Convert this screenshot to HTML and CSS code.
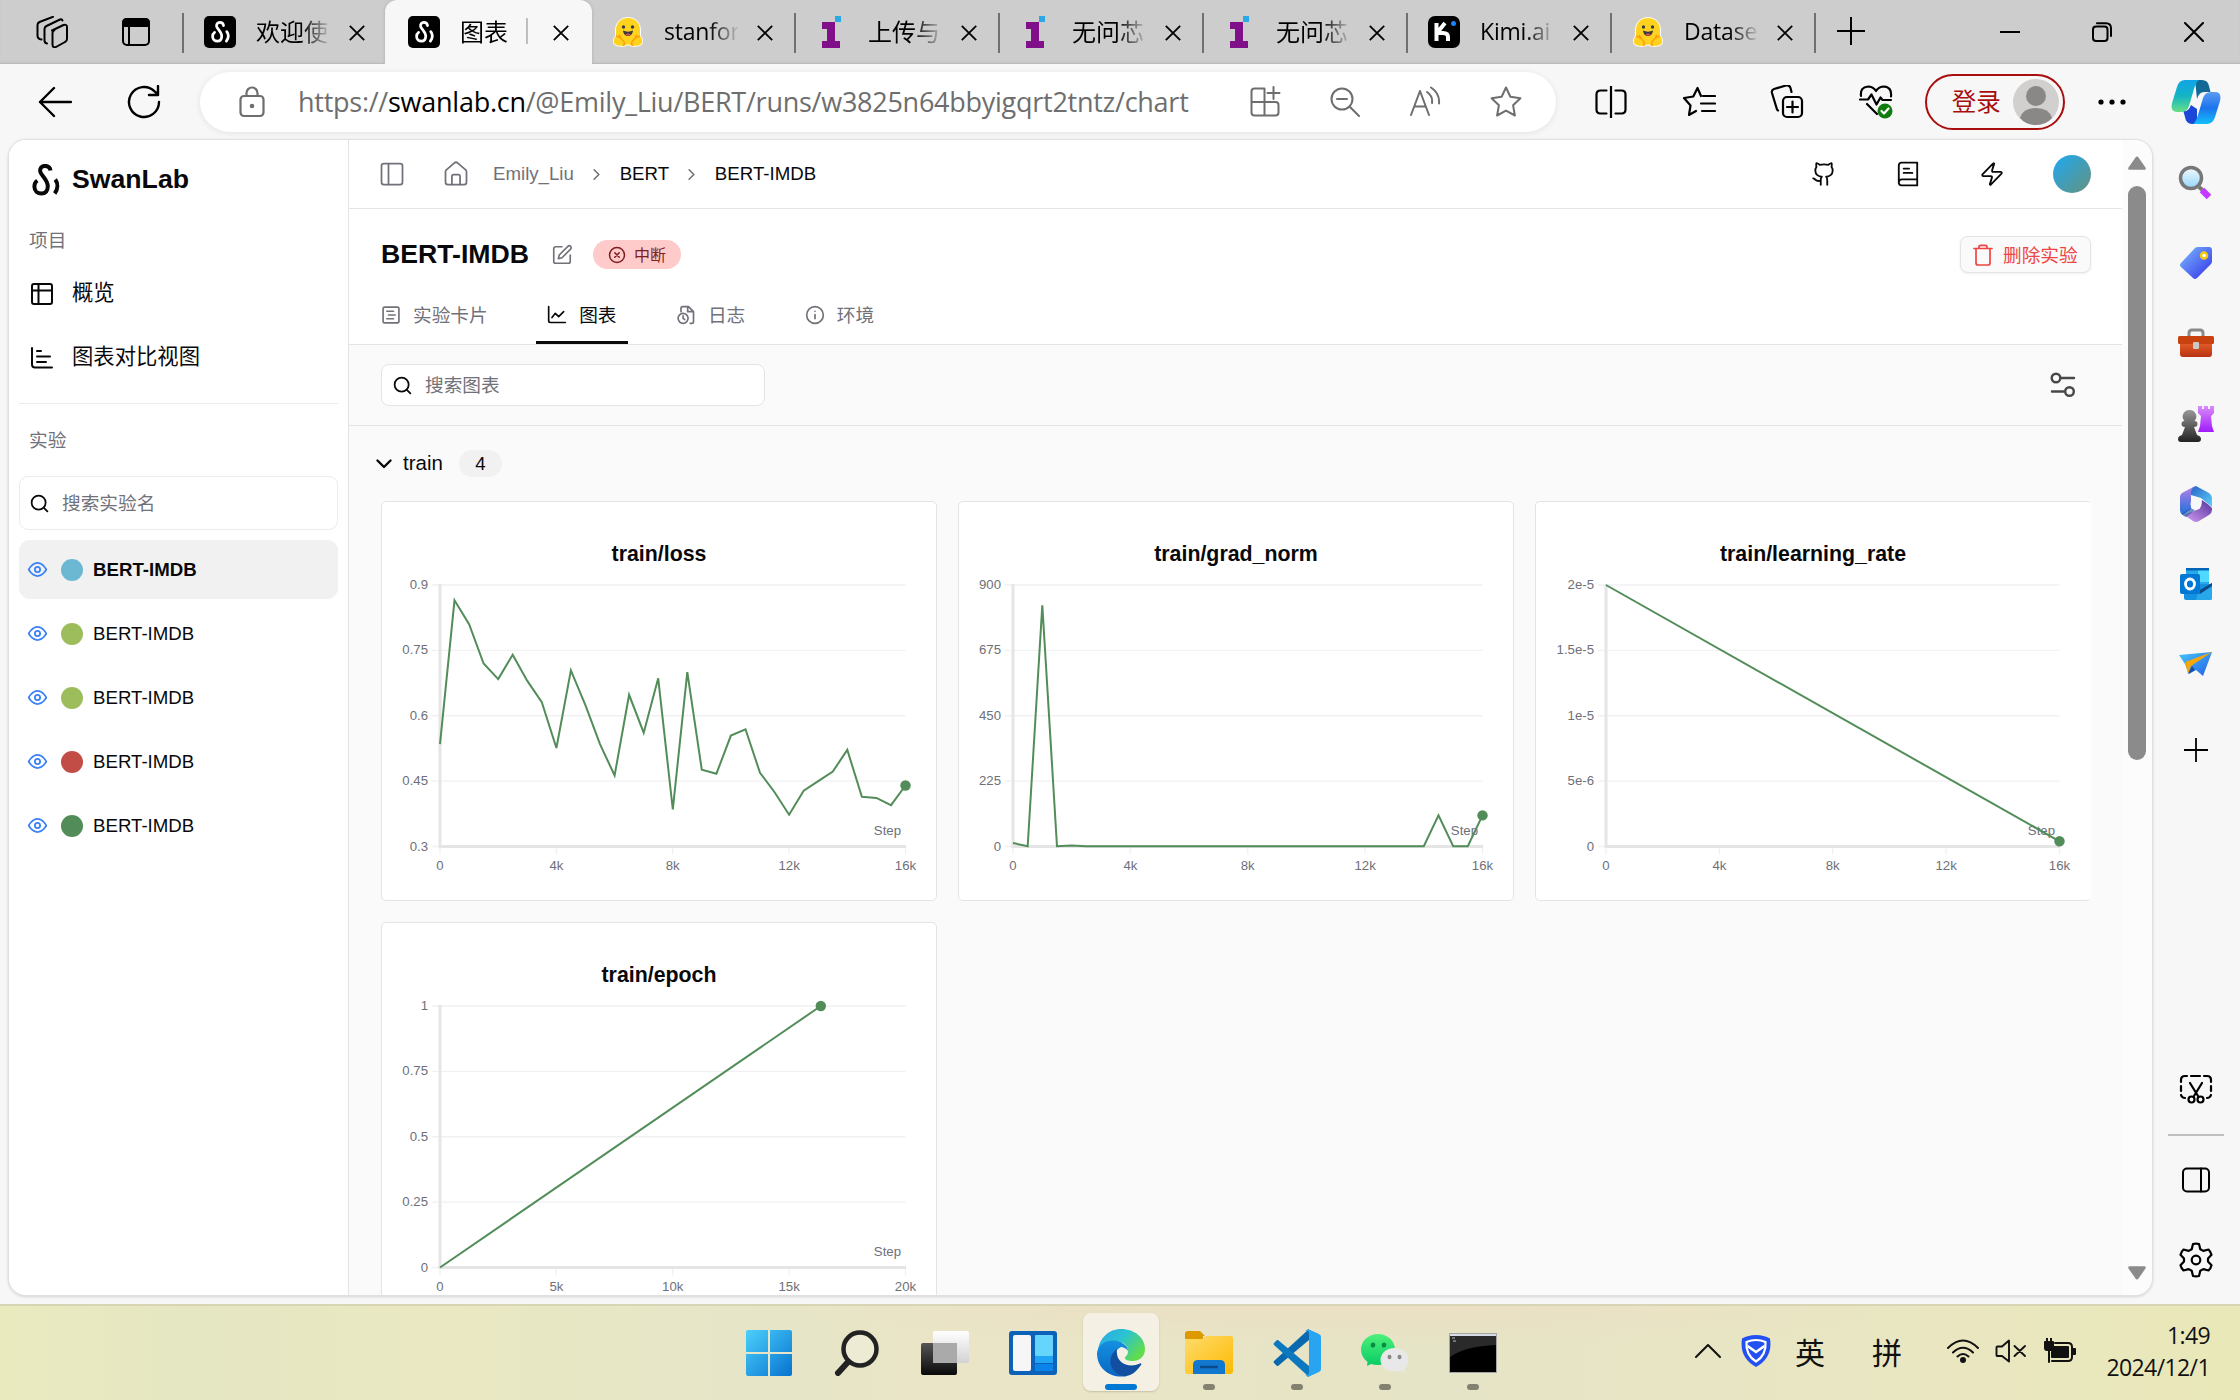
FILE: index.html
```html
<!DOCTYPE html>
<html lang="zh-CN">
<head>
<meta charset="utf-8">
<title>图表 | SwanLab</title>
<link rel="stylesheet" href="styles.css">
</head>
<body>
<svg class="defs" width="0" height="0">
  <defs>
    <linearGradient id="g-win" x1="0" y1="0" x2="1" y2="1"><stop offset="0" stop-color="#4cd0fb"/><stop offset="1" stop-color="#0672d0"/></linearGradient>
    <linearGradient id="g-dark" x1="0" y1="0" x2="0" y2="1"><stop offset="0" stop-color="#555"/><stop offset="1" stop-color="#0a0a0a"/></linearGradient>
    <linearGradient id="g-gray" x1="0" y1="0" x2="0" y2="1"><stop offset="0" stop-color="#999"/><stop offset="1" stop-color="#222"/></linearGradient>
    <linearGradient id="g-paper" x1="0" y1="0" x2="0" y2="1"><stop offset="0" stop-color="#fff"/><stop offset="1" stop-color="#d2d2d2"/></linearGradient>
    <linearGradient id="g-edge1" x1="0" y1="0" x2="1" y2=".6"><stop offset="0" stop-color="#2aa5e8"/><stop offset=".5" stop-color="#2bc3d2"/><stop offset="1" stop-color="#62dc4c"/></linearGradient>
    <linearGradient id="g-edge2" x1="0" y1="0" x2="0" y2="1"><stop offset="0" stop-color="#1590e0"/><stop offset="1" stop-color="#0a66c2"/></linearGradient>
    <linearGradient id="g-folder" x1="0" y1="0" x2="1" y2="1"><stop offset="0" stop-color="#ffdc6e"/><stop offset="1" stop-color="#fdb900"/></linearGradient>
    <linearGradient id="g-blue" x1="0" y1="0" x2="1" y2="1"><stop offset="0" stop-color="#7fbdff"/><stop offset="1" stop-color="#2f2fe8"/></linearGradient>
    <linearGradient id="g-lens" x1="0" y1="0" x2="0" y2="1"><stop offset="0" stop-color="#f4fafe"/><stop offset="1" stop-color="#94d6fb"/></linearGradient>
    <linearGradient id="g-purple" x1="0" y1="0" x2="0" y2="1"><stop offset="0" stop-color="#d98bfb"/><stop offset="1" stop-color="#a11bfb"/></linearGradient>
    <linearGradient id="g-cop1" x1="0" y1="0" x2="0" y2="1"><stop offset="0" stop-color="#10a3e6"/><stop offset=".5" stop-color="#13b5c4"/><stop offset="1" stop-color="#67df84"/></linearGradient>
    <linearGradient id="g-cop2" x1="0" y1="0" x2="0" y2="1"><stop offset="0" stop-color="#5b9cf2"/><stop offset=".5" stop-color="#1b74ee"/><stop offset="1" stop-color="#14c0fa"/></linearGradient>
    <linearGradient id="g-plane" x1="0" y1="0" x2="1" y2="1"><stop offset="0" stop-color="#45c5f8"/><stop offset="1" stop-color="#2560e6"/></linearGradient>
    <linearGradient id="g-wx" x1="0" y1="0" x2="0" y2="1"><stop offset="0" stop-color="#4ef07a"/><stop offset="1" stop-color="#07cc64"/></linearGradient>
    <linearGradient id="g-box" x1="0" y1="0" x2="0" y2="1"><stop offset="0" stop-color="#f0692f"/><stop offset="1" stop-color="#b83212"/></linearGradient>
    <linearGradient id="g-m1" x1="0" y1="0" x2="0" y2="1"><stop offset="0" stop-color="#b681e8"/><stop offset="1" stop-color="#1e6fd8"/></linearGradient>
    <linearGradient id="g-m2" x1="0" y1="0" x2="1" y2="1"><stop offset="0" stop-color="#2a62c8"/><stop offset="1" stop-color="#5bd3fa"/></linearGradient>
    <linearGradient id="g-m3" x1="1" y1="0" x2="0" y2="1"><stop offset="0" stop-color="#54309a"/><stop offset="1" stop-color="#d5a0f6"/></linearGradient>
  </defs>
  <symbol id="swan" viewBox="0 0 28 32"><path d="M18.500 6.500C18 3 15.500 1.900 13 1.900 9.500 1.900 7.800 4.500 8.200 7.500 8.800 11.500 16 15.500 15.800 22.500 15.600 27.500 13 29.600 9.500 29.600 5.500 29.600 2.500 27 2.400 22.800 2.300 20 3.500 17.800 5.300 16.500"/><path d="M23.300 15.500C26.200 19.500 26 25 22.700 29.500"/></symbol>
  <symbol id="close" viewBox="0 0 16 16"><path d="M.8.800 15.200 15.200M15.200.800.800 15.200"/></symbol>
  <symbol id="hug" viewBox="0 0 32 32"><path d="M16 1.500C8.500 1.500 3.500 7 3.500 14v6C.5 23 1 28.500 4 29.500c5 1.500 9 1 12-.800 3 1.800 7 2.300 12 .8 3-1 3.500-6.500.5-9.500v-6c0-7-5-12.500-12.500-12.500z" fill="#ffd21e" stroke="#fff" stroke-width="1"/><path d="M4 20c3 1 6 2 8 6 1 2 0 3-1 3.500M28 20c-3 1-6 2-8 6-1 2 0 3 1 3.500M7 19l2 3M25 19l-2 3" fill="none" stroke="#ff9d0b" stroke-width="1.500"/><circle cx="11.500" cy="11" r="1.700" fill="#3a3b45"/><circle cx="20.500" cy="11" r="1.700" fill="#3a3b45"/><path d="M11 14.500c3 1.500 7 1.500 10 0-.5 4-2.500 5.500-5 5.500s-4.500-1.500-5-5.500z" fill="#3a3b45"/><path d="M13.500 18.500c1.500-1.500 3.500-1.500 5 0-1 1.500-4 1.500-5 0z" fill="#ef4e4e"/></symbol>
  <symbol id="infini" viewBox="0 0 32 32"><path fill="#80108a" d="M6 6h13v19h5v7H6v-7h5V13H6z"/><path fill="#2ba8e6" d="M19 0h6v6h-6z"/></symbol>
  <symbol id="search" viewBox="0 0 24 24"><circle cx="11" cy="11" r="8"/><path d="m21 21-4.300-4.300"/></symbol>
  <symbol id="eye" viewBox="0 0 24 24"><path d="M2 12s3.600-7.500 10-7.500S22 12 22 12s-3.600 7.500-10 7.500S2 12 2 12z"/><circle cx="12" cy="12" r="3"/></symbol>
  <symbol id="chev" viewBox="0 0 24 24"><path d="m9 18 6-6-6-6"/></symbol>
</svg>

<header class="tabbar">
  <div class="tabbar-tools">
    <svg class="ic" width="32" height="32" viewBox="0 0 32 32" stroke-width="2"><path d="M16 14.500 27.500 9q3.500-1 3.500 2v12q0 2-2 3l-9 5q-3.500 1-3.500-2.500V17q0-2 2-3M11 27.500q-2.500-.5-2.500-3V13q0-2 2-3L24 3.500q2-.5 2.500 1M5.500 23.500Q1.500 23 1.500 19.500V9q0-2 2-3L17 .8"/></svg>
    <svg class="ic" width="30" height="30" viewBox="0 0 30 30" stroke-width="2"><rect x="2" y="2" width="26" height="26" rx="4"/><path d="M2 9V6q0-4 4-4h18q4 0 4 4v3z" fill="#000"/><path d="M8 9v19"/></svg>
  </div>
  <div class="tab sep"><span class="fav-swan"><svg width="19" height="22"><use href="#swan"/></svg></span><span class="tab-title">欢迎使</span><svg class="x"><use href="#close"/></svg></div>
  <div class="tab active"><span class="fav-swan"><svg width="19" height="22"><use href="#swan"/></svg></span><span class="tab-title">图表<i class="bar"></i></span><svg class="x"><use href="#close"/></svg></div>
  <div class="tab"><svg class="fav"><use href="#hug"/></svg><span class="tab-title latin">stanfor</span><svg class="x"><use href="#close"/></svg></div>
  <div class="tab sep"><svg class="fav"><use href="#infini"/></svg><span class="tab-title">上传与</span><svg class="x"><use href="#close"/></svg></div>
  <div class="tab sep"><svg class="fav"><use href="#infini"/></svg><span class="tab-title">无问芯</span><svg class="x"><use href="#close"/></svg></div>
  <div class="tab sep"><svg class="fav"><use href="#infini"/></svg><span class="tab-title">无问芯</span><svg class="x"><use href="#close"/></svg></div>
  <div class="tab sep"><svg class="fav" viewBox="0 0 32 32"><rect width="32" height="32" rx="7"/><path d="M8.500 7v18M20 25v-4q0-4-5-4H9M9 17l8-10" fill="none" stroke="#fff" stroke-width="4"/><circle cx="25.500" cy="7.500" r="2.500" fill="#1783ff"/></svg><span class="tab-title latin">Kimi.ai</span><svg class="x"><use href="#close"/></svg></div>
  <div class="tab sep"><svg class="fav"><use href="#hug"/></svg><span class="tab-title latin">Datase</span><svg class="x"><use href="#close"/></svg></div>
  <div class="newtab sep"><svg class="ic" width="28" height="28" viewBox="0 0 28 28" stroke-width="2"><path d="M14 0v28M0 14h28"/></svg></div>
  <div class="window-controls">
    <svg class="ic" width="20" height="20" viewBox="0 0 20 20" stroke-width="2"><path d="M0 10h20"/></svg>
    <svg class="ic" width="20" height="20" viewBox="0 0 20 20" stroke-width="2"><rect x="1" y="4.500" width="14.500" height="14.500" rx="3"/><path d="M5 1.200h9q5 0 5 5V14"/></svg>
    <svg class="ic" width="20" height="20" viewBox="0 0 16 16" stroke-width="1.600"><use href="#close"/></svg>
  </div>
</header>

<div class="toolbar">
  <svg class="ic back" width="34" height="34" viewBox="0 0 34 34" stroke-width="2.400"><path d="M33 17H2M16 3 2 17l14 14"/></svg>
  <svg class="ic" width="34" height="34" viewBox="0 0 34 34" stroke-width="2.400"><path d="M32 17A15 15 0 1 1 27.600 6.400L31 9.500M31 1v9h-9"/></svg>
  <div class="omnibox">
    <svg class="ic" width="26" height="32" viewBox="0 0 26 32" stroke-width="2.200"><rect x="1.500" y="10" width="23" height="20" rx="3.500"/><path d="M7.500 10V7a5.500 5.500 0 0 1 11 0v3"/><circle cx="13" cy="20" r="1.200" fill="currentColor"/></svg>
    <span class="url">https://<b>swanlab.cn</b>/@Emily_Liu/BERT/runs/w3825n64bbyigqrt2tntz/chart</span>
    <div class="omni-icons">
      <svg class="ic" width="32" height="32" viewBox="0 0 32 32" stroke-width="2"><path d="M15.500 16V2.500h-10q-3 0-3 3v21q0 3 3 3h21q3 0 3-3V19q0-3-3-3h-24M15.500 16v13.500M24.500 1v12M18.500 7h12"/></svg>
      <svg class="ic" width="32" height="32" viewBox="0 0 32 32" stroke-width="2"><circle cx="13" cy="13" r="10.500"/><path d="M20.500 20.500 30 30M8 13h10"/></svg>
      <svg class="ic" width="32" height="32" viewBox="0 0 32 32" stroke-width="2"><path d="M2 29 11 5l9 24M5.500 20.500h11M18 6q6 4 5 11M22 1.500q9 6 8 16"/></svg>
      <svg class="ic" width="34" height="34" viewBox="0 0 34 34" stroke-width="2"><path d="m17 2.500 4.400 9.300 10 1.400-7.300 7.100 1.800 10.200L17 25.600l-8.900 4.900 1.800-10.200-7.300-7.100 10-1.400z"/></svg>
    </div>
  </div>
  <div class="tool-icons">
    <svg class="ic" width="32" height="32" viewBox="0 0 32 32" stroke-width="2.200"><path d="M16 0v32M11.500 4.500h-6q-4 0-4 4v15q0 4 4 4h6M20.500 4.500h6q4 0 4 4v15q0 4-4 4h-6"/></svg>
    <svg class="ic" width="34" height="32" viewBox="0 0 34 32" stroke-width="2.200"><path d="M19 10 15.500 2l-4.200 8.500L2 12l6.500 7.500L7 29l7-4M21 10h12M19 17.500h14M20 25h13"/></svg>
    <svg class="ic" width="34" height="34" viewBox="0 0 34 34" stroke-width="2.200"><rect x="13" y="12" width="19" height="20" rx="4"/><path d="M22.500 16.500v11M17 22h11M8 25.500l-1-1L2 8q-.8-3 2-4l12-3.500q3.500-.7 4.500 2.500l1 4"/></svg>
    <svg class="ic" width="34" height="36" viewBox="0 0 34 36" stroke-width="2.200"><path d="M2 12Q1 3 9 2.500q5 0 8 4.500 3-4.500 8-4.500 8 .5 7 10M1 15.500h8l3.500-5 5 10 4-7 2 2.500H32M8 20l10 10"/><circle cx="26" cy="27" r="7.500" fill="#107c10" stroke="none"/><path d="m22.500 27 2.500 2.500 4.500-5" stroke="#fff"/></svg>
  </div>
  <div class="login"><span>登录</span><svg width="46" height="46" viewBox="0 0 46 46"><circle cx="23" cy="23" r="23" fill="#d2d0ce"/><circle cx="23" cy="17" r="10" fill="#8a8886"/><path d="M7 39q3-10 16-10t16 10q-6 7-16 7T7 39z" fill="#8a8886"/></svg></div>
  <svg class="more" width="28" height="8" viewBox="0 0 28 8"><circle cx="3" cy="4" r="2.600"/><circle cx="14" cy="4" r="2.600"/><circle cx="25" cy="4" r="2.600"/></svg>
  <svg class="copilot" width="50" height="44" viewBox="0 0 50 44"><path d="M24 0h7q6 0 7 6l1.500 6H33q-5 0-7 7z" fill="#126a94"/><path d="M14 0h14q-3 2-5 9l-5 17q-2 6-8 6H6q-7 0-5-9L6 7q2-7 8-7z" fill="url(#g-cop1)"/><path d="M26 44h-5q-6 0-7-7l-1.500-5.500q5.500-.5 7.500-6.500l6 4z" fill="#1a47d8"/><path d="M36 44H22q3-2 5-9l5-17q2-6 8-6h4q7 0 5 9l-5 16q-2 7-8 7z" fill="url(#g-cop2)"/></svg>
</div>

<div class="workspace">
  <div class="page">
    <aside class="sidebar">
      <div class="brand"><svg class="logo" width="28" height="32"><use href="#swan"/></svg><span>SwanLab</span></div>
      <div class="label">项目</div>
      <a class="nav"><svg class="ic" width="24" height="24" viewBox="0 0 24 24" stroke-width="2"><rect x="2" y="2" width="20" height="20" rx="2"/><path d="M2 8.500h20M8.500 2v20"/></svg>概览</a>
      <a class="nav"><svg class="ic" width="24" height="24" viewBox="0 0 24 24" stroke-width="2"><path d="M2 2v16.500q0 3 3 3h17M7 5h4M7 10.500h13M7 16h9"/></svg>图表对比视图</a>
      <hr>
      <div class="label exp">实验</div>
      <div class="side-search"><svg class="ic" width="21" height="21" stroke-width="2"><use href="#search"/></svg><span>搜索实验名</span></div>
      <div class="run selected"><svg class="ic eye"><use href="#eye"/></svg><i class="dot c-cyan"></i>BERT-IMDB</div>
      <div class="run"><svg class="ic eye"><use href="#eye"/></svg><i class="dot c-lime"></i>BERT-IMDB</div>
      <div class="run"><svg class="ic eye"><use href="#eye"/></svg><i class="dot c-lime"></i>BERT-IMDB</div>
      <div class="run"><svg class="ic eye"><use href="#eye"/></svg><i class="dot c-red"></i>BERT-IMDB</div>
      <div class="run"><svg class="ic eye"><use href="#eye"/></svg><i class="dot c-green"></i>BERT-IMDB</div>
    </aside>
    <main class="main">
      <div class="crumbs">
        <svg class="ic muted panel-ic" width="28" height="28" viewBox="0 0 24 24" stroke-width="1.500"><rect x="3" y="3" width="18" height="18" rx="2"/><path d="M9 3v18"/></svg>
        <svg class="ic muted home-ic" width="28" height="28" viewBox="0 0 24 24" stroke-width="1.500"><path d="M3 10a2 2 0 0 1 .709-1.528l7-6a2 2 0 0 1 2.582 0l7 6A2 2 0 0 1 21 10v9a2 2 0 0 1-2 2H5a2 2 0 0 1-2-2z"/><path d="M8.500 21v-7a1.500 1.500 0 0 1 1.500-1.500h4a1.500 1.500 0 0 1 1.500 1.500v7"/></svg>
        <span class="muted">Emily_Liu</span>
        <svg class="ic muted chev" width="19" height="19" stroke-width="2"><use href="#chev"/></svg>
        <span>BERT</span>
        <svg class="ic muted chev" width="19" height="19" stroke-width="2"><use href="#chev"/></svg>
        <span>BERT-IMDB</span>
        <div class="crumb-right">
          <svg class="ic" width="26" height="26" viewBox="0 0 24 24" stroke-width="1.700"><path d="M15 22v-4a4.800 4.800 0 0 0-1-3.500c3 0 6-2 6-5.500.08-1.250-.27-2.480-1-3.500.28-1.150.28-2.350 0-3.500 0 0-1 0-3 1.500-2.640-.5-5.360-.5-8 0C6 2 5 2 5 2c-.3 1.150-.3 2.350 0 3.500A5.403 5.403 0 0 0 4 9c0 3.500 3 5.500 6 5.500-.39.490-.68 1.050-.85 1.650-.17.600-.22 1.230-.15 1.850v4M9 18c-4.510 2-5-2-7-2"/></svg>
          <svg class="ic" width="26" height="26" viewBox="0 0 24 24" stroke-width="1.700"><path d="M3.500 19.500V4A2.500 2.500 0 0 1 6 1.500h14.500v21H6a2.500 2.500 0 0 1-2.500-3q0-2.500 3-2.500h14M8 7h5M8 11h8"/></svg>
          <svg class="ic" width="26" height="26" viewBox="0 0 24 24" stroke-width="1.700"><path d="M4 14a1 1 0 0 1-.78-1.630l9.900-10.200a.5.500 0 0 1 .86.460l-1.920 6.020A1 1 0 0 0 13 10h7a1 1 0 0 1 .78 1.630l-9.900 10.200a.5.500 0 0 1-.86-.46l1.920-6.020A1 1 0 0 0 11 14z"/></svg>
          <i class="avatar"></i>
        </div>
      </div>
      <div class="heading">
        <div class="title-row">
          <h1>BERT-IMDB</h1>
          <svg class="ic muted edit" width="22" height="22" viewBox="0 0 24 24" stroke-width="1.800"><path d="M12 3H5a2 2 0 0 0-2 2v14a2 2 0 0 0 2 2h14a2 2 0 0 0 2-2v-7"/><path d="M18.400 2.600a2.100 2.100 0 0 1 3 3L12 15l-4 1 1-4z"/></svg>
          <span class="badge"><svg class="ic" width="18" height="18" viewBox="0 0 24 24" stroke-width="2"><circle cx="12" cy="12" r="10"/><path d="m15 9-6 6M9 9l6 6"/></svg><span>中断</span></span>
          <span class="delete"><svg class="ic" width="20" height="22" viewBox="0 0 20 22" stroke-width="1.700"><path d="M1 4.500h18M3 4.500V19q0 2 2 2h10q2 0 2-2V4.500M6 4.500V3q0-1.700 1.700-1.700h4.600Q14 1.300 14 3v1.500"/></svg><span>删除实验</span></span>
        </div>
        <nav class="tabs">
          <span class="ptab"><svg class="ic" width="20" height="20" viewBox="0 0 24 24" stroke-width="2"><rect x="2.500" y="2.500" width="19" height="19" rx="2"/><path d="M7 7.500h8M9 12h8M7 16.500h8"/></svg>实验卡片</span>
          <span class="ptab on"><svg class="ic" width="20" height="20" viewBox="0 0 24 24" stroke-width="2"><path d="M2 2v17q0 2 2 2h18M6 15l4-5 4 4 6-6"/></svg>图表</span>
          <span class="ptab"><svg class="ic" width="20" height="20" viewBox="0 0 24 24" stroke-width="2"><path d="M6 8V4q0-2 2-2h7l6 6v12q0 2-2 2h-2M14 2v6h7"/><circle cx="8.500" cy="16" r="6"/><path d="M8.500 13v3l2 1.500"/></svg>日志</span>
          <span class="ptab"><svg class="ic" width="20" height="20" viewBox="0 0 24 24" stroke-width="2"><circle cx="12" cy="12" r="10"/><path d="M12 11.500v5M12 7.500v.1"/></svg>环境</span>
        </nav>
      </div>
      <div class="filter">
        <div class="chart-search"><svg class="ic" width="21" height="21" stroke-width="2"><use href="#search"/></svg><span>搜索图表</span></div>
        <svg class="ic sliders" width="26" height="26" viewBox="0 0 26 26" stroke-width="2.400"><circle cx="6" cy="6" r="4.300"/><path d="M11 6h13M2 19.500h12"/><circle cx="19.500" cy="19.500" r="4.300"/></svg>
      </div>
      <section class="group">
        <div class="group-head"><svg class="ic" width="16" height="10" viewBox="0 0 16 10" stroke-width="2.400"><path d="m1.500 1.500 6.500 6.500 6.500-6.500"/></svg><span class="group-name">train</span><span class="count">4</span></div>
        <div class="cards">
          <div class="card"><h2>train/loss</h2><svg class="chart" data-chart="loss"></svg></div>
          <div class="card"><h2>train/grad_norm</h2><svg class="chart" data-chart="grad"></svg></div>
          <div class="card flush"><h2>train/learning_rate</h2><svg class="chart" data-chart="lr"></svg></div>
          <div class="card"><h2>train/epoch</h2><svg class="chart" data-chart="epoch"></svg></div>
        </div>
      </section>
    </main>
    <div class="scrollbar">
      <svg width="18" height="14" viewBox="0 0 18 14"><path d="M9 .5q1 0 1.500 1l7 10q1 2.300-1.500 2.300H2Q-.500 13.800.500 11.500l7-10Q8 .500 9 .500z"/></svg>
      <i class="thumb"></i>
      <svg width="18" height="14" viewBox="0 0 18 14"><path d="M9 13.500q1 0 1.500-1l7-10Q18.500.200 16 .200H2Q-.500.200.500 2.500l7 10q.5 1 1.500 1z"/></svg>
    </div>
  </div>
  <aside class="edgebar">
    <svg width="36" height="36" viewBox="0 0 36 36"><path d="m21 22 3.500 3" stroke="#777" stroke-width="4"/><path d="m24 25 7 7" stroke="#c23bff" stroke-width="6.500"/><circle cx="13" cy="13" r="10.500" fill="url(#g-lens)" stroke="#777" stroke-width="3.500"/></svg>
    <svg width="36" height="36" viewBox="0 0 36 36"><path d="M17 3q1-1 3-1h11q3 0 3 3v11q0 2-1 3L19 33q-2 2-4 0L3 22q-2-2 0-4z" fill="url(#g-blue)"/><circle cx="26" cy="10.500" r="3" fill="#fff" stroke="#f6c90e" stroke-width="2.500"/></svg>
    <svg width="36" height="36" viewBox="0 0 36 36"><path d="M11 12V8q0-3 3-3h8q3 0 3 3v4" fill="none" stroke="#8a8a8a" stroke-width="3"/><rect x="2" y="14" width="32" height="18" rx="3" fill="url(#g-box)"/><rect y="11" width="36" height="8" rx="1.500" fill="#c7420f"/><rect x="15" y="17" width="6" height="7" rx="1" fill="#c9c9c9"/></svg>
    <svg width="36" height="36" viewBox="0 0 36 36"><path d="M20 0h4v3h2V0h4v3h2V0h4v7l-3 3 1 10 2 6H20l2-6 1-10-3-3z" fill="url(#g-purple)"/><path d="M11.500 4a6.500 6.500 0 0 1 5 11q3 0 3 3t-3.500 3l3 8q4 1 4 4t-3 3H3q-3 0-3-3t4-4l3-8q-3.500 0-3.500-3t3-3a6.500 6.500 0 0 1 5-11z" fill="url(#g-gray)"/></svg>
    <svg width="36" height="36" viewBox="0 0 36 36"><path d="M17 0 5 6.500Q2 8 2 11v13q0 3 2.500 5L13 23V7q0-4 4-7z" fill="url(#g-m1)"/><path d="M13 9V5q1-4 5-5l13 7q3 2 3 5v9l-11-9z" fill="url(#g-m2)"/><path d="M24 14q5 3 10 8v2q0 3-3 5l-10 6q-3 2-6 0L6 29l10-4q8-3 8-11z" fill="url(#g-m3)"/><path d="M4 28l9-6 4 2-9 7q-2 0-4-3z" fill="#174e9c" opacity=".6"/><ellipse cx="18" cy="18" rx="5.500" ry="6" fill="#f7f7f7"/></svg>
    <svg width="36" height="36" viewBox="0 0 36 36"><path d="M8 2h23v16H8z" fill="#28a8ea"/><path d="M20 2h11v14H20z" fill="#50d9ff"/><path d="M8 2h23v2.500H8z" fill="#0364b8"/><path d="M6 18h28v14q0 2-2 2H8q-2 0-2-2z" fill="#1490df"/><path d="m34 17-14 9-2 8h14q2 0 2-2z" fill="#28a8ea"/><path d="M20 25 34 17v3l-12 8z" fill="#0a4a87"/><rect x="2" y="8" width="20" height="20" rx="2" fill="#0078d4"/><ellipse cx="12" cy="18" rx="4.500" ry="5" fill="none" stroke="#fff" stroke-width="2.800"/></svg>
    <svg width="36" height="36" viewBox="0 0 36 36"><path d="M1 9 34 6 25 30l-7-6-7 4-4-10z" fill="url(#g-plane)"/><path d="M7 16 34 6 13 20l-3 8z" fill="#f5a60c"/><path d="m10 28 4-8 3 4z" fill="#174ea6"/></svg>
    <svg class="ic add" width="24" height="24" viewBox="0 0 24 24" stroke-width="1.800"><path d="M12 0v24M0 12h24"/></svg>
    <div class="edgebar-bottom">
      <svg class="ic" width="34" height="32" viewBox="0 0 34 32" stroke-width="2.200"><path d="M2 9V7q0-4 4-4h2M12 3h9M25 3h3q4 0 4 4v2M2 13v5M32 13v5M2 22q1 3 4 3M32 22q-1 3-4 3M11 10l8 13M23 10l-8 13"/><circle cx="12.500" cy="26.500" r="3"/><circle cx="21.500" cy="26.500" r="3"/></svg>
      <hr>
      <svg class="ic" width="30" height="26" viewBox="0 0 30 26" stroke-width="2"><rect x="2" y="1.500" width="26" height="23" rx="4"/><path d="M20 1.500v23"/></svg>
      <svg class="ic" width="34" height="36" viewBox="0 0 34 36" stroke-width="2.200"><circle cx="17" cy="18" r="4.300"/><path d="M14 2q3-.8 6 0l1.300 5.200 3 1.700L29.500 7.500q2.300 2.300 3 5.200L29 16.500v3l3.500 3.800q-.7 3-3 5.200l-5.200-1.400-3 1.700L20 34q-3 .8-6 0l-1.300-5.200-3-1.700-5.200 1.400q-2.300-2.300-3-5.200L5 19.500v-3l-3.500-3.800q.7-3 3-5.200l5.200 1.400 3-1.700z"/></svg>
    </div>
  </aside>
</div>

<footer class="taskbar">
  <div class="apps">
    <div class="app"><svg width="46" height="46" viewBox="0 0 46 46" fill="url(#g-win)"><path d="M2 0h20v22H0V2q0-2 2-2zM24 0h20q2 0 2 2v20H24zM0 24h22v22H2q-2 0-2-2zM24 24h22v20q0 2-2 2H24z"/></svg></div>
    <div class="app"><svg width="46" height="46" viewBox="0 0 46 46"><circle cx="26" cy="19" r="16.500" fill="#fff" fill-opacity=".25" stroke="#222" stroke-width="4.500"/><path d="m14 32-10 11" stroke="#222" stroke-width="6" stroke-linecap="round"/></svg></div>
    <div class="app"><svg width="48" height="46" viewBox="0 0 48 46"><rect y="13" width="36" height="32" rx="2" fill="url(#g-dark)"/><rect x="12" y="1" width="36" height="32" rx="2" fill="url(#g-paper)"/><path d="M12 13h24v20H12z" fill="#aaa"/></svg></div>
    <div class="app"><svg width="48" height="44" viewBox="0 0 48 44"><rect width="48" height="44" rx="3" fill="#0c62b8"/><rect x="4" y="4" width="18" height="36" rx="2" fill="#f6f6f6"/><rect x="26" y="4" width="18" height="21" rx="1" fill="#66d5fb"/><path d="M26 25h18v7H26z" fill="#22a4f5"/><path d="M26 33h18v7H26z" fill="#0a84ea"/></svg></div>
    <div class="app current"><svg width="48" height="48" viewBox="0 0 48 48"><path d="M1 22C2 9 12 0 24 0c14 0 24 9 24 20 0 8-6 12-12 12-5 0-8-1-8-3s3-2 3-7c0-6-6-10-13-10-9 0-15 5-17 10z" fill="url(#g-edge1)"/><path d="M0 24C1 16 8 11.500 16 11.500c8 0 15 5 15 10.500-2-3-5-4-7-4-6 3-9 10-6 18 2 6 8 10 12 11C15 50 0 41 0 24z" fill="url(#g-edge2)"/><path d="M20 20c-7 5-8 13-5 19 4 7 12 10 18 7 5-2 8-6 11-10 .8-1 0-2-1-1.500-11 5-25 0-23-14.500z" fill="#124fa0"/></svg><i class="mark"></i></div>
    <div class="app"><svg width="48" height="44" viewBox="0 0 48 44"><path d="M0 3q0-3 3-3h12l5 5h-2v6H0z" fill="#dd9a00"/><path d="M0 8h17l4-3h25q2 0 2 2v33q0 3-3 3H3q-3 0-3-3z" fill="url(#g-folder)"/><path d="M8 43V34q0-5 5-5h22q5 0 5 5v9z" fill="#1277cf"/><path d="M15 36h18" stroke="#0b4a8c" stroke-width="2.500"/></svg><i class="mark"></i></div>
    <div class="app"><svg width="48" height="48" viewBox="0 0 48 48"><path d="M5 37 36 11V0L1 32q-1 1 0 2l3 3z" fill="#0a69ae"/><path d="m5 11 31 26v11L1 16q-1-1 0-2l3-3z" fill="#0c78c0"/><path d="m35 0 11 5q2 1 2 3v32q0 2-2 3l-11 5-3-2q4 1 4-3V5q0-4-4-3z" fill="#29a4f0"/></svg><i class="mark"></i></div>
    <div class="app"><svg width="48" height="42" viewBox="0 0 48 42"><path d="M17 2c9.500 0 17 7 17 15.500S26.500 33 17 33q-4 0-7-1l-4 2 .5-4Q0 25 0 17.500C0 9 7.500 2 17 2z" fill="url(#g-wx)"/><ellipse cx="12" cy="13" rx="2.300" ry="2.600" fill="#078b42"/><ellipse cx="23" cy="13" rx="2.300" ry="2.600" fill="#078b42"/><path d="M33.500 16c8 0 14 5.500 14 12q0 5-4 8.500l.5 4-4-2q-3 1-6.500 1c-8 0-14-5-14-11.500s6-12 14-12z" fill="#e8e8e8"/><ellipse cx="28.500" cy="25" rx="2" ry="2.200" fill="#888"/><ellipse cx="38.500" cy="25" rx="2" ry="2.200" fill="#888"/></svg><i class="mark"></i></div>
    <div class="app"><svg width="48" height="40" viewBox="0 0 48 40"><rect x=".5" y=".5" width="47" height="39" fill="#000" stroke="#a5a5a5"/><path d="M1 1h46v2H1z" fill="#d8dce4"/><path d="M1 24Q16 13 47 12V3H1z" fill="#2a2a2a"/><path d="M3 5h3M4 8h3" stroke="#bbb"/></svg><i class="mark"></i></div>
  </div>
  <div class="tray">
    <svg class="ic" width="26" height="14" viewBox="0 0 26 14" stroke-width="2"><path d="M1 13 13 1l12 12"/></svg>
    <svg class="shield" width="30" height="32" viewBox="0 0 30 32"><path d="M15 0q8 0 14 3.500Q32 23 15 32-2 23 1 3.500 7 0 15 0z" fill="#2350f0"/><path d="M15 5q5 0 9.500 2Q25.500 20 15 26.500 4.500 20 5.500 7 10 5 15 5z" fill="none" stroke="#fff" stroke-width="2.200"/><path d="m6.500 11 8.500 6 8.500-6" fill="none" stroke="#fff" stroke-width="2.600"/></svg>
    <span class="ime first">英</span><span class="ime">拼</span>
    <svg class="ic wifi" width="32" height="24" viewBox="0 0 32 24" stroke-width="2"><path d="M1 9Q16-6 31 9M6 13.500q10-9.500 20 0M10.500 17.500q5.500-5 11 0"/><circle cx="16" cy="21" r="2" fill="#111"/></svg>
    <svg class="ic vol" width="32" height="24" viewBox="0 0 32 24" stroke-width="1.900"><path d="M1.500 8.500q0-1 1-1H7L14 1.500v21L7 17H2.500q-1 0-1-1zM19.500 7l10.500 10M30 7 19.500 17"/></svg>
    <svg class="ic bat" width="34" height="26" viewBox="0 0 34 26" stroke-width="2"><path d="M12 5h13q4 0 4 4v10q0 4-4 4H9"/><path d="M11 9h14v10H9v-5q3-1 3-5zM2 4h8v6q0 2-2 2H4q-2 0-2-2zM30 11h2v5h-2z" fill="#111"/><path d="M4 4V0M8 4V0M6 12v12"/></svg>
    <div class="clock"><span>1:49</span><span>2024/12/1</span></div>
  </div>
</footer>
<script src="charts.js"></script>
</body>
</html>
```
FILE: styles.css
```css
*{box-sizing:border-box}
body{margin:0;width:2240px;height:1400px;overflow:hidden;display:flex;flex-direction:column;background:#f7f7f7;color:#09090b;font-family:"Liberation Sans","Noto Sans CJK SC",sans-serif;font-size:18.67px}
svg{flex:none;display:block}
.defs{position:absolute}
.ic{fill:none;stroke:currentColor;stroke-linecap:round;stroke-linejoin:round}
.muted{color:#71717a}

/* browser tab strip */
.tabbar{height:64px;flex:none;display:flex;background:#cdcdcd;box-shadow:inset 0 -2px 2px -1px #b5b5b5;color:#000}
.tabbar-tools{width:182px;display:flex;align-items:center;padding-left:36px;gap:53px}
.tab{width:204px;flex:none;display:flex;align-items:center;padding-left:22px;background:linear-gradient(#707070,#707070) no-repeat 0 13px/0 40px}
.tab.sep,.newtab.sep{background-size:2px 40px}
.tab.active{background:#f7f7f7;border-radius:12px 12px 0 0;width:207px;margin:0 -2px 0 -1px;padding-left:23px;box-shadow:0 0 3px #aaa;clip-path:inset(0 -4px 0 -4px)}
.fav,.fav-swan{width:32px;height:32px;flex:none;margin-right:20px}
.fav-swan{background:#000;border-radius:5px;display:flex;align-items:center;justify-content:center}
.fav-swan svg{fill:none;stroke:#fff;stroke-width:4;stroke-linecap:round}
.tab-title{width:74px;margin-right:19px;font:24px/36px "Noto Sans CJK SC",sans-serif;margin-top:-2px;white-space:nowrap;display:flex;align-items:center;-webkit-mask-image:linear-gradient(90deg,#000 45px,transparent 76px);mask-image:linear-gradient(90deg,#000 45px,transparent 76px)}
.tab-title.latin{font-family:"Open Sans",sans-serif;font-size:23px;letter-spacing:-.2px}
.bar{width:2px;height:26px;background:#333;margin-left:18px}
.x{width:16px;height:16px;stroke:#000;stroke-width:1.800;fill:none;margin-top:2px}
.newtab{padding:17px 0 0 23px;width:54px;background:linear-gradient(#707070,#707070) no-repeat 0 13px/0 40px}
.window-controls{margin-left:auto;display:flex;align-items:center;gap:72px;padding-right:36px}

/* address row */
.toolbar{height:75px;flex:none;display:flex;align-items:center;padding:1px 19px 0 38px;color:#000}
.toolbar .back{margin-right:55px}
.omnibox{width:1356px;height:60px;margin-left:39px;background:#fff;border-radius:30px;display:flex;align-items:center;padding:0 33px 0 39px;color:#6e6e6e;box-shadow:0 1px 6px rgba(0,0,0,.09)}
.url{margin-left:33px;font:27px/40px "Open Sans",sans-serif;letter-spacing:-.26px;white-space:nowrap}
.url b{font-weight:400;color:#000}
.omni-icons{margin-left:auto;display:flex;align-items:center;gap:48px}
.tool-icons{display:flex;align-items:center;gap:54.600px;margin-left:39px}
.login{margin-left:32px;width:140px;height:56px;border:2.500px solid #a80e0e;border-radius:28px;display:flex;align-items:center;justify-content:space-between;padding:0 4px 0 25px;color:#a80e0e;font:24.500px/40px "Noto Sans CJK SC",sans-serif}
.login span{margin-top:-3px}
.more{margin-left:33px}
.copilot{margin-left:auto}

.workspace{height:1165px;flex:none;display:flex;border-bottom:8px solid #f7f7f7}
.page{width:2145px;height:1157px;margin-left:8px;border:1px solid #e0e0e0;border-radius:18px;overflow:hidden;display:flex;background:#fafafa;box-shadow:0 1px 3px rgba(0,0,0,.14)}

/* project sidebar */
.sidebar{width:340px;flex:none;background:#fff;border-right:1px solid #e4e4e7;padding:0 10px}
.brand{height:79px;display:flex;align-items:center;padding-left:13px;gap:12px;font-size:26.67px;font-weight:700}
.brand span{margin-top:-1px}
.logo{fill:none;stroke:#09090b;stroke-width:4;stroke-linecap:butt}
.label{height:42px;line-height:44px;padding-left:10px;color:#71717a}
.label.exp{margin:15px 0 15px}
.nav{display:flex;align-items:center;height:64px;padding-left:11px;gap:18px;font-size:21.33px;line-height:30px}
.nav .ic{margin-top:1px}
hr{border:0;height:1px;background:#ececee;margin:14px 0 0}
.side-search{height:54px;border:1px solid #ececee;border-radius:9px;display:flex;align-items:center;padding-left:9px;gap:12px;color:#71717a;margin-bottom:10px}
.side-search span,.chart-search span,.delete span{margin-top:-3px}
.side-search .ic,.chart-search .ic{color:#09090b}
.run{display:flex;align-items:center;height:59px;margin-bottom:5px;padding-left:8px;border-radius:11px}
.run.selected{background:#f1f1f2;font-weight:700}
.eye{width:21px;height:21px;stroke:#3b82f6;stroke-width:2}
.dot{width:22px;height:22px;border-radius:50%;margin:0 10px 0 13px}
.c-cyan{background:#6cb8d2}.c-lime{background:#9dbd5c}.c-red{background:#c24d46}.c-green{background:#528d59}

/* run page */
.main{flex:1;min-width:0}
.crumbs{height:69px;background:#fff;border-bottom:1px solid #e4e4e7;display:flex;align-items:center;padding:0 31px 0 29px}
.panel-ic{margin-right:36px}.home-ic{margin-right:23px}
.chev{margin:0 13.400px}
.crumb-right{margin-left:auto;display:flex;align-items:center;gap:58px}
.avatar{width:38px;height:38px;border-radius:50%;background:linear-gradient(135deg,#1ea9f2,#65927e);margin-left:-10px}
.heading{height:136px;background:#fff;border-bottom:1px solid #e4e4e7;padding:27px 31px 0 32px}
.title-row{height:37px;display:flex;align-items:center}
h1{margin:-1px 0 0;font-size:26.67px}
.edit{margin:0 20px 0 22px}
.badge{height:29px;border-radius:15px;background:#fecaca;color:#7f1d1d;display:flex;align-items:center;gap:8px;padding:0 15px;font-size:16px}
.badge span{margin-top:-2px}
.delete{margin-left:auto;width:131px;height:37px;border:1px solid #e4e4e7;border-radius:8px;background:#fafafa;color:#ef4444;display:flex;align-items:center;gap:10px;padding-left:12px;box-shadow:0 1px 3px rgba(0,0,0,.07)}
.tabs{display:flex;gap:36.500px;margin:12px 0 0 -11px}
.ptab{height:59px;display:flex;align-items:center;gap:12px;padding:0 12px 0 11px;color:#71717a;border-bottom:3px solid transparent}
.ptab .ic{margin-top:4px}
.ptab.on{color:#09090b;border-bottom-color:#09090b}
.filter{height:81px;border-bottom:1px solid #e4e4e7;display:flex;align-items:center;justify-content:space-between;padding:0 46px 0 32px}
.chart-search{width:384px;height:42px;background:#fff;border:1px solid #e4e4e7;border-radius:8px;display:flex;align-items:center;padding-left:10px;gap:12px;color:#71717a}
.sliders{color:#484848}
.group-head{height:75px;display:flex;align-items:center;padding-left:27px;gap:11px}
.group-name{font-size:20.500px;margin-top:-1px}
.count{margin-left:5px;width:43px;height:27px;border-radius:14px;background:#f1f1f2;display:flex;align-items:center;justify-content:center}
.cards{display:grid;grid-template-columns:repeat(3,556px);gap:21px;margin-left:32px}
.card{height:400px;background:#fff;border:1px solid #e4e4e7;border-radius:5px;display:grid}
.card.flush{border-right-color:#fff}
.card>*{grid-area:1/1}
h2{margin:40px 0 0;font-size:21.330px;line-height:24px;text-align:center}
.chart{width:554px;height:398px;font-size:13.200px;fill:#6e7079}
.grid{stroke:#f1f1f3;stroke-width:1.300}
.axis{stroke:#e5e5e6;stroke-width:3;fill:none}
.series{stroke:#528d59;stroke-width:2;fill:none;stroke-linejoin:miter;stroke-miterlimit:4}
.last{fill:#528d59}
.scrollbar{width:30px;background:#fcfcfc;display:flex;flex-direction:column;align-items:center;padding:16px 0 15px;fill:#8b8b8b}
.thumb{width:18px;height:574px;border-radius:9px;background:#8b8b8b;margin:16px 0 auto}

/* right-hand browser bar */
.edgebar{width:87px;display:flex;flex-direction:column;align-items:center;padding:26px 2px 18px 0;gap:44.200px;color:#000}
.edgebar .add{margin-top:12px}
.edgebar-bottom{margin-top:auto;display:flex;flex-direction:column;align-items:center}
.edgebar-bottom hr{width:56px;height:2px;background:#c0c0c0;margin:29px 0 31px}
.edgebar-bottom svg:last-child{margin-top:49px}

.taskbar{height:96px;flex:none;display:flex;border-top:2px solid #d8d5b4;background:radial-gradient(ellipse at 60% 0,#ecdfc4 0,transparent 30%),linear-gradient(90deg,#eaeabf 0,#e5e7c2 8%,#e9e8c2 20%,#e6e5c8 34%,#eae5c6 42%,#e6e4c6 65%,#e9e6c2 85%,#e9e8b8 100%)}
.apps{display:flex;margin-left:731px;padding-top:7px;gap:12px}
.app{width:76px;height:78px;display:grid;place-items:center;grid-template-rows:70px 8px;border-radius:8px}
.app svg{margin-top:9px}
.current{background:#f4f1e4;box-shadow:0 1px 2px #c5c0a0}
.mark{width:12px;height:6px;border-radius:3px;background:#838270}
.current .mark{width:32px;background:#0078d4}
.tray{margin-left:auto;display:flex;align-items:center;padding:0 30px 4px 0;color:#111}
.shield{margin:0 24px 0 20px}
.ime{font:30px/40px "Noto Sans CJK SC",sans-serif;margin-right:45px;margin-top:-1px}
.ime.first{margin-right:47px}
.vol{margin:0 16px}
.clock{display:flex;flex-direction:column;align-items:flex-end;width:133px;font:23px/32px "Open Sans",sans-serif;letter-spacing:-.6px}
```
FILE: charts.js
```js
const PLOT_TOP = 83, PLOT_BOTTOM = 344.5, PLOT_RIGHT = 523.5;

const every500 = values => values.map((v, i) => [i * 500, v]);

const charts = {
  loss: {
    left: 58, x: [0, 16000], y: [0.3, 0.9],
    xLabels: ['0', '4k', '8k', '12k', '16k'],
    yLabels: ['0.3', '0.45', '0.6', '0.75', '0.9'],
    points: every500([.535, .865, .81, .72, .684, .74, .68, .631, .526, .704, .624, .535, .463, .648, .561,
      .686, .385, .7, .476, .467, .5545, .569, .469, .4246, .373, .428, .45, .472, .5216, .414, .4116, .3948, .44])
  },
  grad: {
    left: 54, x: [0, 16000], y: [0, 900],
    xLabels: ['0', '4k', '8k', '12k', '16k'],
    yLabels: ['0', '225', '450', '675', '900'],
    points: every500([12, 1, 830, 1, 3, ...Array(24).fill(1), 107, 1, 1, 107])
  },
  lr: {
    left: 70, x: [0, 16000], y: [0, 2e-5],
    xLabels: ['0', '4k', '8k', '12k', '16k'],
    yLabels: ['0', '5e-6', '1e-5', '1.5e-5', '2e-5'],
    points: [[0, 2e-5], [16000, 4e-7]]
  },
  epoch: {
    left: 58, x: [0, 20000], y: [0, 1],
    xLabels: ['0', '5k', '10k', '15k', '20k'],
    yLabels: ['0', '0.25', '0.5', '0.75', '1'],
    points: [[0, 0], [16360, 1]]
  }
};

for (const svg of document.querySelectorAll('[data-chart]')) {
  const c = charts[svg.dataset.chart];
  const px = v => c.left + (v - c.x[0]) / (c.x[1] - c.x[0]) * (PLOT_RIGHT - c.left);
  const py = v => PLOT_BOTTOM - (v - c.y[0]) / (c.y[1] - c.y[0]) * (PLOT_BOTTOM - PLOT_TOP);
  let out = '';
  c.yLabels.forEach((label, i) => {
    const y = PLOT_BOTTOM - i * (PLOT_BOTTOM - PLOT_TOP) / 4;
    out += `<path class="grid" d="M${c.left - 8} ${y}H${PLOT_RIGHT}"/>`;
    out += `<text x="${c.left - 12}" y="${y + 4}" text-anchor="end">${label}</text>`;
  });
  c.xLabels.forEach((label, i) => {
    const x = c.left + i * (PLOT_RIGHT - c.left) / 4;
    out += `<path class="grid" d="M${x} ${PLOT_BOTTOM}v8"/>`;
    out += `<text x="${x}" y="368" text-anchor="middle">${label}</text>`;
  });
  out += `<path class="axis" d="M${c.left} ${PLOT_TOP - 1}V${PLOT_BOTTOM}H${PLOT_RIGHT + .5}"/>`;
  out += `<text x="519" y="332.500" text-anchor="end">Step</text>`;
  const pts = c.points.map(([x, y]) => [px(x).toFixed(1), py(y).toFixed(1)]);
  out += `<polyline class="series" points="${pts.join(' ')}"/>`;
  const [ex, ey] = pts[pts.length - 1];
  out += `<circle class="last" cx="${ex}" cy="${ey}" r="5.2"/>`;
  svg.innerHTML = out;
}
```
